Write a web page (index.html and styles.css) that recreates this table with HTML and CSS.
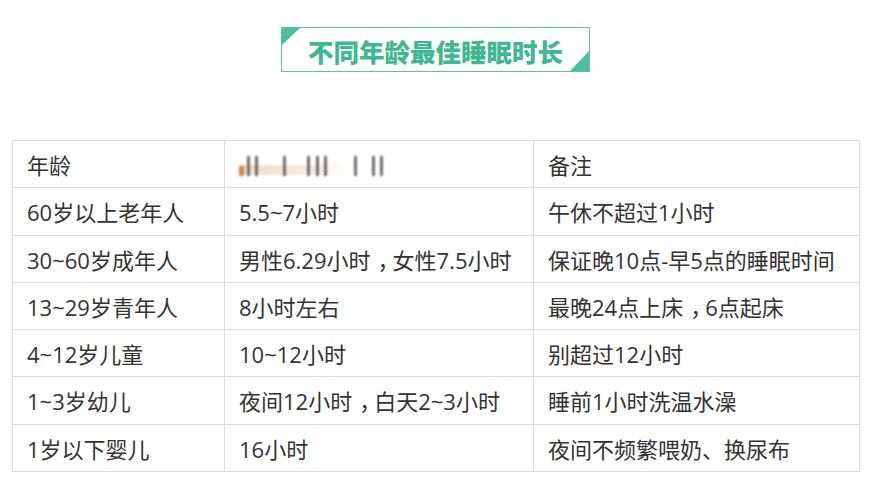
FILE: index.html
```html
<!DOCTYPE html>
<html lang="zh-CN">
<head>
<meta charset="utf-8">
<title>不同年龄最佳睡眠时长</title>
<link rel="stylesheet" href="styles.css">
</head>
<body>
<div class="page">
  <div class="title-wrap">
    <h1 class="title">不同年龄最佳睡眠时长</h1>
  </div>
  <table class="sleep">
    <colgroup>
      <col class="c1">
      <col class="c2">
      <col class="c3">
    </colgroup>
    <tbody>
      <tr>
        <td>年龄</td>
        <td><span class="blur" aria-hidden="true"><i class="o"></i><i class="b"></i><i class="b"></i><i class="b g1"></i><i class="b g2"></i><i class="b g3"></i><i class="b"></i><i class="b g4"></i><i class="b g5"></i><i class="b"></i></span></td>
        <td>备注</td>
      </tr>
      <tr><td>60岁以上老年人</td><td>5.5~7小时</td><td>午休不超过1小时</td></tr>
      <tr><td>30~60岁成年人</td><td>男性6.29小时<span class="p">，</span>女性7.5小时</td><td>保证晚10点-早5点的睡眠时间</td></tr>
      <tr><td>13~29岁青年人</td><td>8小时左右</td><td>最晚24点上床<span class="p">，</span>6点起床</td></tr>
      <tr><td>4~12岁儿童</td><td>10~12小时</td><td>别超过12小时</td></tr>
      <tr><td>1~3岁幼儿</td><td>夜间12小时<span class="p">，</span>白天2~3小时</td><td>睡前1小时洗温水澡</td></tr>
      <tr><td>1岁以下婴儿</td><td>16小时</td><td>夜间不频繁喂奶、换尿布</td></tr>
    </tbody>
  </table>
</div>
</body>
</html>
```

FILE: styles.css
```css
html, body {
  margin: 0;
  padding: 0;
  background: #ffffff;
}

.page {
  width: 847px;
  padding: 27px 0 0 12px;
}

.title-wrap {
  display: flex;
  justify-content: center;
}

.title {
  position: relative;
  margin: 0;
  width: 309px;
  height: 45px;
  box-sizing: border-box;
  border: 1.5px solid #5cc3a4;
  display: flex;
  align-items: center;
  justify-content: center;
  font-family: "Noto Sans CJK SC", sans-serif;
  font-weight: 900;
  font-size: 25.5px;
  color: #3fb892;
  padding-top: 1px;
}

.title::before {
  content: "";
  position: absolute;
  top: 0;
  left: 0;
  border-top: 17px solid #4cbf9c;
  border-right: 18px solid transparent;
}

.title::after {
  content: "";
  position: absolute;
  right: 0;
  bottom: 0;
  border-bottom: 20px solid #4cbf9c;
  border-left: 19px solid transparent;
}

.sleep {
  margin-top: 68px;
  width: 847px;
  border-collapse: collapse;
  table-layout: fixed;
  font-family: "Open Sans", "Noto Sans CJK SC", sans-serif;
  font-size: 22px;
  color: #333333;
}

.c1 { width: 212px; }
.c2 { width: 309px; }
.c3 { width: 326px; }

.sleep td {
  padding: 13px 13px 11.3px 14px;
  border: 1px solid #dcdcdc;
  white-space: nowrap;
  vertical-align: middle;
  line-height: 22px;
}

.p {
  font-feature-settings: "halt";
  padding: 0 4px 0 7px;
}

.blur {
  display: inline-flex;
  align-items: flex-end;
  height: 22px;
  gap: 5px;
  padding: 0 8px 0 0;
  filter: blur(1.2px);
  background: linear-gradient(to right, #f3dcc4 0%, #f4ebe2 60%, rgba(255,255,255,0) 100%) no-repeat 0 11px / 110px 10px;
  vertical-align: top;
}

.blur i {
  display: block;
  width: 3px;
  height: 20px;
  background: #6a6a6a;
}

.blur .o {
  width: 5px;
  height: 10px;
  background: #c9874a;
  margin-right: -2px;
}

.blur .g1 { margin-left: 20px; }
.blur .g2 { margin-left: 16px; }
.blur .g3 { margin-left: 1px; }
.blur .g4 { margin-left: 22px; }
.blur .g5 { margin-left: 10px; }
```
